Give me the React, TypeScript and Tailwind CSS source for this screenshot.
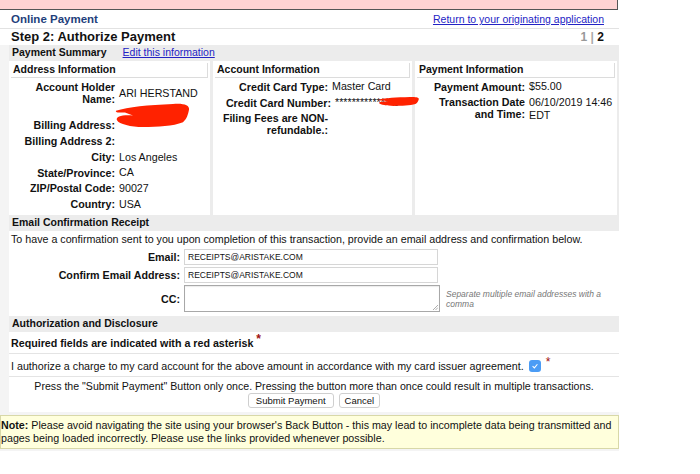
import React from 'react';

const font = { fontFamily: '"Liberation Sans", Arial, sans-serif' };

function SectionHeader({ children }: { children: React.ReactNode }) {
  return (
    <div className="flex h-[16px] items-center gap-[16px] bg-[#ececec] pl-[3px] text-[10.5px] font-bold text-[#111]">
      {children}
    </div>
  );
}

function ColHeader({ title }: { title: string }) {
  return (
    <div className="mx-[2px] mt-[2px] flex h-[15px] items-center border-b border-r border-[#dcdcdc] pl-[2px] text-[10.5px] font-bold text-[#111]">
      {title}
    </div>
  );
}

function Row({
  label,
  value,
  labelWidth,
  className = '',
}: {
  label: React.ReactNode;
  value?: React.ReactNode;
  labelWidth: string;
  className?: string;
}) {
  return (
    <div className={`flex items-center ${className}`}>
      <div className={`${labelWidth} shrink-0 text-right font-bold leading-[12px] text-[#111]`}>{label}</div>
      <div className="pl-[4px] leading-[13px] text-[#111]">{value}</div>
    </div>
  );
}

function Scribble({ className }: { className: string }) {
  return (
    <svg className={`pointer-events-none absolute ${className}`} viewBox="0 0 80 30" preserveAspectRatio="none">
      <path
        d="M3 10 C 15 6, 35 4, 60 3 C 70 2, 77 4, 76 9 C 75 14, 74 18, 70 22 C 60 26, 45 27, 30 27 C 18 27, 6 24, 4 20 C 2 16, 10 14, 20 15 L 12 12 C 6 12, 2 12, 3 10 Z"
        fill="#ff2200"
      />
    </svg>
  );
}

export default function App() {
  return (
    <div className="relative h-[474px] w-[700px] overflow-hidden bg-white text-[10.7px] text-[#111]" style={font}>
      <div className="h-[10px] w-[618px] border-b border-r border-[#555] bg-[#ffd2d2]" />

      <div className="w-[619px]">
        <div className="flex h-[19px] items-center justify-between border-b border-[#e2e2e2] pl-[11px] pr-[15px] pt-[2px]">
          <span className="text-[11.5px] font-bold text-[#1f3f7c]">Online Payment</span>
          <a className="text-[10.5px] text-[#2323c4] underline">Return to your originating application</a>
        </div>
        <div className="flex h-[16px] items-center justify-between pl-[11px] pr-[15px]">
          <span className="text-[13px] font-bold text-[#111]">Step 2: Authorize Payment</span>
          <span className="text-[12px] font-bold">
            <span className="text-[#999]">1</span> <span className="text-[#aaa]">|</span>{' '}
            <span className="text-[#111]">2</span>
          </span>
        </div>

        <div className="flex">
          <div className="w-[9px] shrink-0 bg-[#f4f4f4]" />
          <div className="flex-1">
            <SectionHeader>
              <span>Payment Summary</span>
              <a className="font-normal text-[#2323c4] underline">Edit this information</a>
            </SectionHeader>

            <div className="relative flex h-[154px] gap-[3px] bg-[#ececec] pr-[2px]">
              <div className="flex w-[201px] flex-col bg-white">
                <ColHeader title="Address Information" />
                <div className="flex flex-col pt-[2px]">
                  <Row
                    labelWidth="w-[106px]"
                    className="h-[26px]"
                    label={
                      <>
                        Account Holder
                        <br />
                        Name:
                      </>
                    }
                    value="ARI HERSTAND"
                  />
                  <Row labelWidth="w-[106px]" className="h-[27px] items-end pb-[2px]" label="Billing Address:" value="" />
                  <Row labelWidth="w-[106px]" className="h-[16px]" label="Billing Address 2:" value="" />
                  <Row labelWidth="w-[106px]" className="h-[16px]" label="City:" value="Los Angeles" />
                  <Row labelWidth="w-[106px]" className="h-[15px]" label="State/Province:" value="CA" />
                  <Row labelWidth="w-[106px]" className="h-[16px]" label="ZIP/Postal Code:" value="90027" />
                  <Row labelWidth="w-[106px]" className="h-[16px]" label="Country:" value="USA" />
                </div>
              </div>

              <div className="flex w-[199px] flex-col bg-white">
                <ColHeader title="Account Information" />
                <div className="flex flex-col gap-[3px] pt-[2px]">
                  <Row labelWidth="w-[115px]" label="Credit Card Type:" value="Master Card" />
                  <Row labelWidth="w-[118px]" label="Credit Card Number:" value="**************6" />
                  <Row
                    labelWidth="w-[115px]"
                    className="items-start"
                    label={
                      <>
                        Filing Fees are NON-
                        <br />
                        refundable.:
                      </>
                    }
                  />
                </div>
              </div>

              <div className="flex flex-1 flex-col bg-white">
                <ColHeader title="Payment Information" />
                <div className="flex flex-col gap-[3px] pt-[2px]">
                  <Row labelWidth="w-[110px]" label="Payment Amount:" value="$55.00" />
                  <Row
                    labelWidth="w-[110px]"
                    className="items-start"
                    label={
                      <>
                        Transaction Date
                        <br />
                        and Time:
                      </>
                    }
                    value={
                      <>
                        06/10/2019 14:46
                        <br />
                        EDT
                      </>
                    }
                  />
                </div>
              </div>

              <Scribble className="left-[104px] top-[40px] h-[29px] w-[80px]" />
              <Scribble className="left-[368px] top-[35px] h-[11px] w-[44px]" />
            </div>

            <SectionHeader>Email Confirmation Receipt</SectionHeader>
            <div className="bg-white pb-[4px]">
              <div className="pl-[2px] pt-[2px] leading-[13px]">
                To have a confirmation sent to you upon completion of this transaction, provide an email address and
                confirmation below.
              </div>
              <div className="mt-[3px] flex items-center">
                <div className="w-[171px] text-right font-bold">Email:</div>
                <div className="ml-[4px] flex h-[16px] w-[254px] items-center border border-[#d6d6d6] pl-[3px] text-[8.5px]">
                  RECEIPTS@ARISTAKE.COM
                </div>
              </div>
              <div className="mt-[2px] flex items-center">
                <div className="w-[171px] text-right font-bold">Confirm Email Address:</div>
                <div className="ml-[4px] flex h-[16px] w-[254px] items-center border border-[#d6d6d6] pl-[3px] text-[8.5px]">
                  RECEIPTS@ARISTAKE.COM
                </div>
              </div>
              <div className="mt-[2px] flex items-center">
                <div className="w-[171px] text-right font-bold">CC:</div>
                <div className="relative ml-[4px] h-[27px] w-[256px] border border-[#a8a8a8] shadow-[inset_0_1px_1px_rgba(0,0,0,0.08)]">
                  <svg className="absolute bottom-[1px] right-[1px] h-[6px] w-[6px]" viewBox="0 0 6 6">
                    <path d="M1 6 L6 1 M3.5 6 L6 3.5" stroke="#999" strokeWidth="0.8" />
                  </svg>
                </div>
                <div className="ml-[6px] w-[170px] text-[8.5px] italic leading-[10px] text-[#777]">
                  Separate multiple email addresses with a comma
                </div>
              </div>
            </div>

            <SectionHeader>Authorization and Disclosure</SectionHeader>
            <div className="bg-white">
              <div className="flex h-[22px] items-center border-b border-[#e4e4e4] pl-[2px] font-bold">
                Required fields are indicated with a red asterisk
                <span className="relative -top-[4px] ml-[3px] text-[12px] text-[#a01010]">*</span>
              </div>
              <div className="flex h-[23px] items-center border-b border-[#e4e4e4] pl-[2px] pt-[2px]">
                I authorize a charge to my card account for the above amount in accordance with my card issuer
                agreement.
                <span className="ml-[5px] flex h-[12px] w-[12px] items-center justify-center rounded-[3px] bg-[#4b9cf5]">
                  <svg viewBox="0 0 10 10" className="h-[8px] w-[8px]">
                    <path d="M2 5.2 L4.2 7.4 L8 2.8" fill="none" stroke="white" strokeWidth="1.3" />
                  </svg>
                </span>
                <span className="relative -top-[4px] ml-[5px] text-[12px] text-[#a01010]">*</span>
              </div>
              <div className="flex flex-col items-center pb-[4px] pt-[3px]">
                <div className="text-[10.6px] leading-[13px]">
                  Press the "Submit Payment" Button only once. Pressing the button more than once could result in
                  multiple transactions.
                </div>
                <div className="flex gap-[5px]">
                  <button className="h-[15px] rounded-[3px] border border-[#cfcfcf] bg-white px-[7px] text-[9.5px] leading-[13px] text-[#111]">
                    Submit Payment
                  </button>
                  <button className="h-[15px] rounded-[3px] border border-[#cfcfcf] bg-white px-[5px] text-[9.5px] leading-[13px] text-[#111]">
                    Cancel
                  </button>
                </div>
              </div>
            </div>
          </div>
        </div>

        <div className="bg-[#f4f4f4] pb-[2px] pt-[3px]">
          <div className="border border-[#d8d8a8] bg-[#ffffdc] py-[3px] leading-[13px]">
            <span className="font-bold">Note:</span> Please avoid navigating the site using your browser's Back Button
            - this may lead to incomplete data being transmitted and pages being loaded incorrectly. Please use the
            links provided whenever possible.
          </div>
        </div>
      </div>
    </div>
  );
}
